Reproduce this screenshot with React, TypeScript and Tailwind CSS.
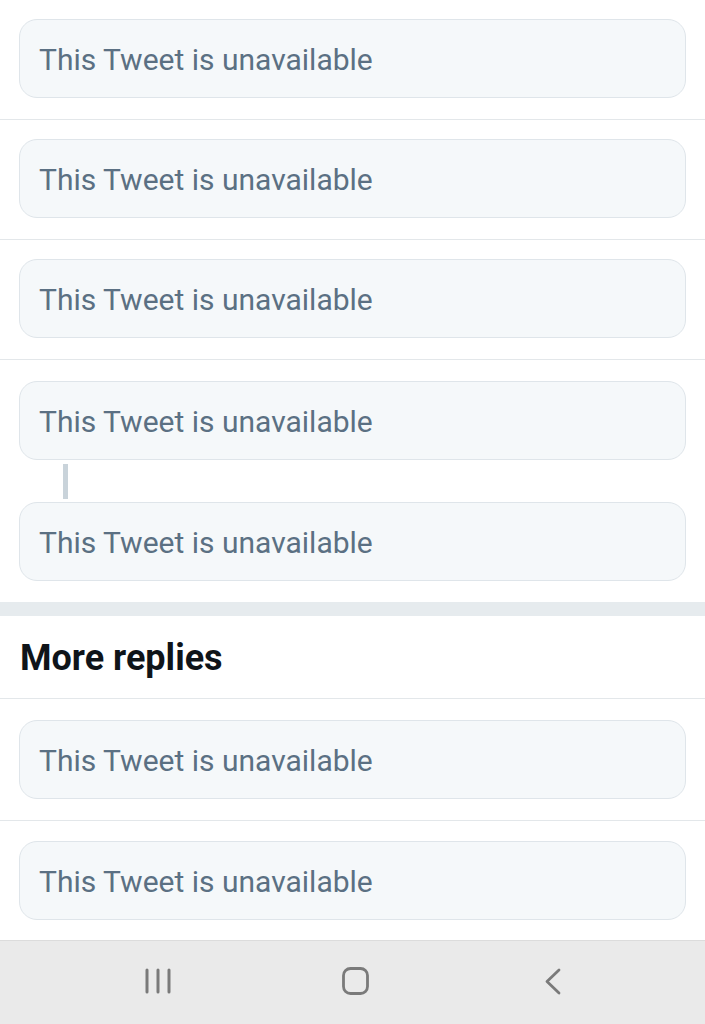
import React from "react";

const font = { fontFamily: "Roboto, 'Noto Sans', sans-serif" };

function Card() {
  return (
    <div className="h-[79px] rounded-[18px] border border-[#dfe5ea] bg-[#f5f8fa] flex items-center pl-[19px]">
      <span className="text-[30px] text-[#5b7083] leading-none pt-[2px]">This Tweet is unavailable</span>
    </div>
  );
}

function Row() {
  return (
    <div className="px-[19px] pt-[19px] pb-[21px] border-b border-[#e3e7ea]">
      <Card />
    </div>
  );
}

export default function App() {
  return (
    <div className="w-[705px] h-[1024px] bg-white flex flex-col overflow-hidden" style={font}>
      <Row />
      <Row />
      <Row />
      <div className="px-[19px] pt-[21px] pb-[21px]">
        <Card />
        <div className="h-[42px] flex items-center">
          <div className="ml-[44px] w-[5px] h-[35px] bg-[#c9d3da]" />
        </div>
        <Card />
      </div>
      <div className="h-[14px] bg-[#e6ebee]" />
      <div className="h-[83px] flex items-center px-[20px] border-b border-[#e3e7ea]">
        <span className="text-[36px] font-bold text-[#0f1419] leading-none pt-[2px]">More replies</span>
      </div>
      <div className="px-[19px] pt-[21px] pb-[21px] border-b border-[#e3e7ea]">
        <Card />
      </div>
      <div className="px-[19px] pt-[20px] pb-[20px]">
        <Card />
      </div>
      <div className="flex-1 bg-[#eaeaea] border-t border-[#dcdcdc] flex items-center pl-[145px] pb-[3px]">
        <svg width="26" height="26" viewBox="0 0 26 26">
          <g stroke="#7a7a7a" strokeWidth="3" strokeLinecap="round">
            <line x1="2" y1="2" x2="2" y2="24" />
            <line x1="13" y1="2" x2="13" y2="24" />
            <line x1="24" y1="2" x2="24" y2="24" />
          </g>
        </svg>
        <svg width="27" height="28" viewBox="0 0 27 28" className="ml-[171px]">
          <rect x="1.5" y="1.5" width="24" height="25" rx="7" fill="none" stroke="#7a7a7a" strokeWidth="2.8" />
        </svg>
        <svg width="16" height="27" viewBox="0 0 16 27" className="ml-[176px]">
          <polyline points="14,2 2,13.5 14,25" fill="none" stroke="#7a7a7a" strokeWidth="2.8" strokeLinecap="round" strokeLinejoin="round" />
        </svg>
      </div>
    </div>
  );
}
